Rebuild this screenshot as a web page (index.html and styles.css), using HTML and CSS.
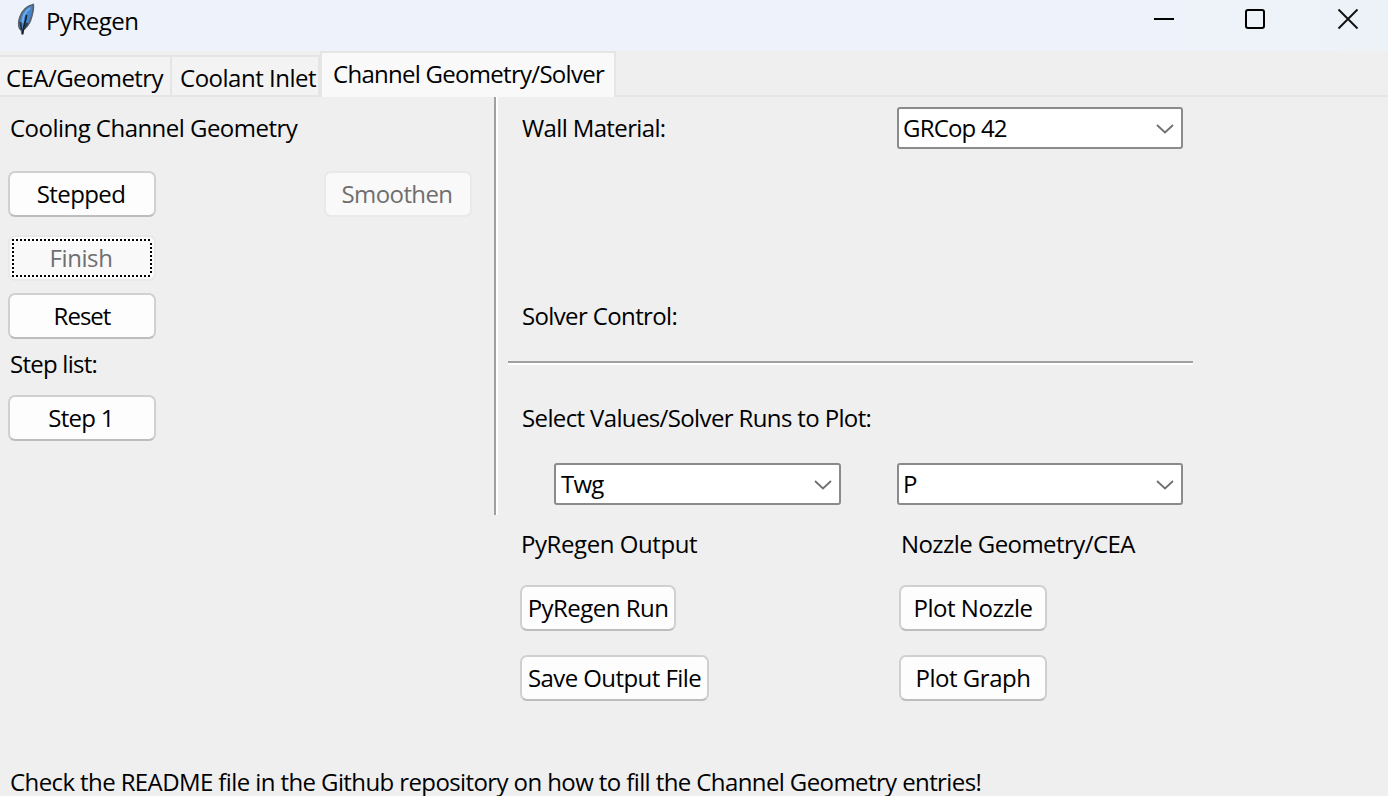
FILE: index.html
```html
<!DOCTYPE html>
<html lang="en">
<head>
<meta charset="utf-8">
<title>PyRegen</title>
<link rel="stylesheet" href="styles.css">
</head>
<body>
<div class="window">
  <header class="titlebar">
    <svg class="feather" width="20" height="34" viewBox="0 0 20 34">
      <path d="M17.200 1.500C11 3 6 8 4 14C2.600 18 2.400 22 3.500 25L5.500 27.500L6.400 31L7.200 27C10 24.500 12.800 22 14.200 18C16 13 18 6 17.200 1.500Z" fill="#4585cc" stroke="#59626c" stroke-width="1.800"/>
      <path d="M14 5C9.500 8 6.700 14 6.500 20" fill="none" stroke="#70acea" stroke-width="2"/>
      <path d="M10.500 12C9.800 18 7.500 23 6.400 31.500" fill="none" stroke="#15202c" stroke-width="1.700"/>
      <path d="M4.500 19L5.500 27M11.500 20L7.500 26" fill="none" stroke="#25313e" stroke-width="1.700"/>
    </svg>
    <span class="title">PyRegen</span>
    <svg class="controls" width="206" height="22" viewBox="0 0 206 22">
      <path d="M1 11H21" stroke="#000" stroke-width="2"/>
      <rect x="93" y="2" width="18" height="18" rx="2" fill="none" stroke="#000" stroke-width="2"/>
      <path d="M185.500 1.500L204.500 20.500M204.500 1.500L185.500 20.500" stroke="#111" stroke-width="1.900"/>
    </svg>
  </header>

  <nav class="tabs">
    <div class="tab tab-cea">CEA/Geometry</div>
    <div class="tab tab-coolant">Coolant Inlet</div>
    <div class="tab tab-active">Channel Geometry/Solver</div>
    <div class="tab-rest"></div>
  </nav>

  <main class="content">
    <section class="channel">
      <div class="label">Cooling Channel Geometry</div>
      <div class="button-row">
        <button class="btn">Stepped</button>
        <button class="btn btn-disabled" disabled>Smoothen</button>
      </div>
      <button class="btn btn-disabled btn-focus finish" disabled>Finish</button>
      <button class="btn reset">Reset</button>
      <div class="label step-label">Step list:</div>
      <button class="btn step">Step 1</button>
    </section>

    <section class="solver">
      <div class="pair material">
        <div class="label">Wall Material:</div>
        <div class="combo combo-tight">GRCop 42<svg class="chevron" width="18" height="10" viewBox="0 0 18 10"><path d="M1 1L9 8.500L17 1" fill="none" stroke="#707070" stroke-width="1.800"/></svg></div>
      </div>
      <div class="label control">Solver Control:</div>
      <div class="rule"></div>
      <div class="label select">Select Values/Solver Runs to Plot:</div>
      <div class="pair plots">
        <div class="combo combo-run combo-tight">Twg<svg class="chevron" width="18" height="10" viewBox="0 0 18 10"><path d="M1 1L9 8.500L17 1" fill="none" stroke="#707070" stroke-width="1.800"/></svg></div>
        <div class="combo">P<svg class="chevron" width="18" height="10" viewBox="0 0 18 10"><path d="M1 1L9 8.500L17 1" fill="none" stroke="#707070" stroke-width="1.800"/></svg></div>
      </div>
      <div class="pair outputs">
        <div class="label output-label">PyRegen Output</div>
        <div class="label nozzle-label">Nozzle Geometry/CEA</div>
      </div>
      <div class="pair runs">
        <button class="btn btn-run">PyRegen Run</button>
        <button class="btn btn-plot">Plot Nozzle</button>
      </div>
      <div class="pair saves">
        <button class="btn btn-save">Save Output File</button>
        <button class="btn btn-plot">Plot Graph</button>
      </div>
    </section>
  </main>
  <footer class="hint">Check the README file in the Github repository on how to fill the Channel Geometry entries!</footer>
</div>
</body>
</html>
```
FILE: styles.css
```css
* { box-sizing: border-box; }
body {
  margin: 0;
  overflow: hidden;
  background: #efefef;
  color: #000;
  font: 24px/32px "Open Sans", "Noto Sans", sans-serif;
  letter-spacing: -0.57px;
}
.window { width: 1388px; height: 796px; display: flex; flex-direction: column; }
.titlebar {
  height: 51px; flex: none; display: flex; align-items: flex-start;
  padding: 3px 29px 0 16px;
  background: linear-gradient(90deg, #eef3fb 0%, #eef3fb 85%, #edf2f7 100%);
}
.title { margin: 2px 0 0 10px; letter-spacing: -0.5px; }
.controls { margin: 5px 0 0 auto; }
.tabs { height: 46px; flex: none; display: flex; align-items: flex-end; white-space: nowrap; }
.tab {
  height: 42px; padding: 5px 0 0; background: #f3f3f3;
  border: 2px solid #e5e5e5; border-width: 2px 2px 2px 0;
}
.tab-cea { width: 172px; padding-left: 6px; }
.tab-coolant { width: 148px; padding-left: 8px; letter-spacing: -0.49px; }
.tab-active {
  width: 296px; height: 46px; padding: 5px 0 0 11px; background: #f9f9f9;
  border-width: 2px 2px 0 2px; letter-spacing: -0.72px;
}
.tab-rest { flex: 1; height: 2px; background: #e5e5e5; }
.content { display: flex; height: 669px; flex: none; }
.label { white-space: nowrap; }
.channel {
  width: 498px; height: 418px; padding: 15px 22px 0 8px;
  border-right: 2px solid #fff; box-shadow: inset -2px 0 #a0a0a0;
  display: flex; flex-direction: column; align-items: flex-start;
}
.channel .label { padding-left: 2px; letter-spacing: -0.53px; }
.button-row { width: 464px; margin-top: 27px; display: flex; justify-content: space-between; }
.btn {
  width: 148px; height: 46px; padding: 0 2px 1px 0; flex: none;
  border: 2px solid #d0d0d0; border-bottom-color: #bdbdbd; border-radius: 7px;
  background: #fdfdfd; color: #000; font: inherit; letter-spacing: -0.6px; white-space: nowrap;
}
.btn-disabled { background: #f9f9f9; border-color: #e9e9e9; color: #6f6f6f; }
.btn-focus { position: relative; }
.btn-focus::after {
  content: ""; position: absolute; left: 2px; top: 2px; width: 140px; height: 38px;
  background:
    repeating-linear-gradient(90deg, #000 0 2px, #fff 2px 4px) 0 0 / 100% 2px no-repeat,
    repeating-linear-gradient(90deg, #000 0 2px, #fff 2px 4px) 0 100% / 100% 2px no-repeat,
    repeating-linear-gradient(#000 0 2px, #fff 2px 4px) 0 0 / 2px 100% no-repeat,
    repeating-linear-gradient(#000 0 2px, #fff 2px 4px) 100% 0 / 2px 100% no-repeat;
}
.finish { margin-top: 18px; letter-spacing: -0.4px; }
.reset { margin-top: 12px; padding-right: 0; letter-spacing: -1px; }
.channel .step-label { margin-top: 9px; letter-spacing: -0.75px; }
.step { margin-top: 15px; letter-spacing: -0.7px; }
.solver { width: 695px; padding: 10px 0 0 10px; }
.pair { display: grid; grid-template-columns: 377px 286px; padding-left: 12px; }
.material { align-items: center; }
.material .label, .control, .select { padding-left: 2px; letter-spacing: -0.63px; }
.control, .select { margin-left: 12px; }
.control { margin-top: 151px; }
.rule { height: 4px; margin-top: 29px; border-top: 2px solid #a0a0a0; border-bottom: 2px solid #fff; }
.select { margin-top: 37px; }
.combo {
  width: 286px; height: 42px; display: flex; align-items: center; justify-content: space-between;
  padding: 0 7px 0 4px; background: #fff; border: 2px solid #8b8b8b; border-radius: 3px;
}
.chevron { margin-top: 2px; }
.combo-tight { letter-spacing: -0.8px; }
.combo-run { width: 287px; margin-left: 34px; padding-left: 5px; }
.plots { margin-top: 29px; }
.outputs { margin-top: 23px; }
.output-label { padding-left: 1px; letter-spacing: -0.43px; }
.nozzle-label { padding-left: 4px; }
.runs { margin-top: 25px; }
.saves { margin-top: 24px; }
.btn-run { width: 156px; padding-right: 0; letter-spacing: -0.52px; }
.btn-save { width: 189px; padding-right: 0; letter-spacing: -0.57px; }
.btn-plot { margin-left: 2px; padding-right: 0; letter-spacing: -0.47px; }
.hint { height: 30px; line-height: 28px; padding: 2px 0 0 10px; flex: none; white-space: nowrap; letter-spacing: -0.6px; }
```
